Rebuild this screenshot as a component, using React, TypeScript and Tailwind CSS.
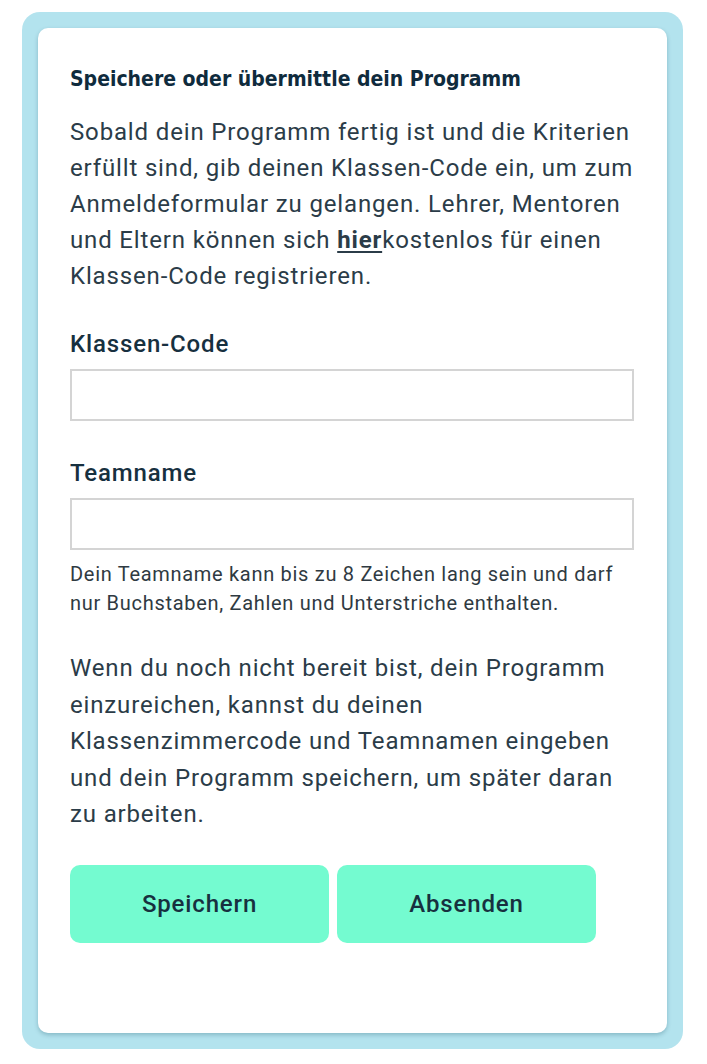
export default function App() {
  return (
    <div className="min-h-[1064px] bg-white pt-[12px] pl-[22px]">
      <div className="w-[661px] rounded-[18px] bg-[#b3e3ee] p-4">
        <div className="rounded-[10px] bg-white pl-8 pt-[37px] pb-[90px] shadow-[0_2px_4px_rgba(0,60,80,0.25)] text-[#2b3c48] font-['Roboto',sans-serif]">
          <h2 className="font-['DejaVu_Sans_Condensed','DejaVu_Sans',sans-serif] text-[21px] font-bold leading-[28px] text-[#0f2b3d]">
            Speichere oder übermittle dein Programm
          </h2>
          <p className="mt-[21px] w-[569px] text-[24px] leading-[36px] tracking-[0.85px]">
            Sobald dein Programm fertig ist und die Kriterien erfüllt sind, gib deinen Klassen-Code ein, um zum Anmeldeformular zu gelangen. Lehrer, Mentoren und Eltern können sich{' '}
            <a href="#" className="font-bold underline underline-offset-[3px]">hier</a>kostenlos für einen Klassen-Code registrieren.
          </p>

          <label className="mt-[35px] block text-[24px] font-medium leading-[30px] tracking-[0.85px] text-[#17303f]">Klassen-Code</label>
          <input className="mt-[10px] block h-[52px] w-[564px] border-2 border-[#d4d4d4] bg-white px-3 outline-none" />

          <label className="mt-[37px] block text-[24px] font-medium leading-[30px] tracking-[0.85px] text-[#17303f]">Teamname</label>
          <input className="mt-[10px] block h-[52px] w-[564px] border-2 border-[#d4d4d4] bg-white px-3 outline-none" />
          <p className="mt-[10px] w-[569px] text-[20px] leading-[29px] tracking-[0.7px] text-[#2f3a42]">
            Dein Teamname kann bis zu 8 Zeichen lang sein und darf nur Buchstaben, Zahlen und Unterstriche enthalten.
          </p>

          <p className="mt-[32px] w-[569px] text-[24px] leading-[36.5px] tracking-[0.85px]">
            Wenn du noch nicht bereit bist, dein Programm einzureichen, kannst du deinen Klassenzimmercode und Teamnamen eingeben und dein Programm speichern, um später daran zu arbeiten.
          </p>

          <div className="mt-[32px] flex gap-2">
            <button className="h-[78px] w-[259px] rounded-[10px] bg-[#74fbd0] text-[24px] font-medium tracking-[0.85px] text-[#17303f]">Speichern</button>
            <button className="h-[78px] w-[259px] rounded-[10px] bg-[#74fbd0] text-[24px] font-medium tracking-[0.85px] text-[#17303f]">Absenden</button>
          </div>
        </div>
      </div>
    </div>
  );
}
